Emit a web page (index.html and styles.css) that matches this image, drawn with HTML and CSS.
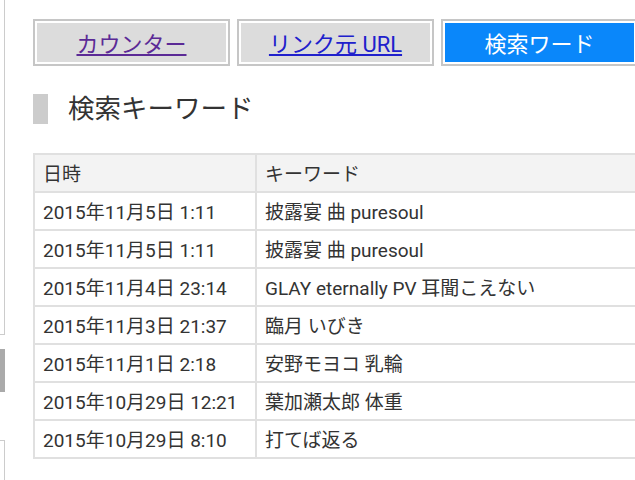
FILE: index.html
```
<!DOCTYPE html>
<html lang="ja">
<head>
<meta charset="utf-8">
<link rel="stylesheet" href="styles.css">
</head>
<body>
<div class="page">
  <aside class="side">
    <div class="side-box"></div>
    <div class="side-block"></div>
    <div class="side-box2"></div>
  </aside>
  <main class="main">
    <nav class="tabs">
      <a class="tab visited" href="#">カウンター</a>
      <a class="tab link" href="#">リンク元 URL</a>
      <span class="tab active">検索ワード</span>
    </nav>
    <h2 class="heading"><span class="bar"></span>検索キーワード</h2>
    <table class="kw">
      <thead>
        <tr><th class="c1">日時</th><th>キーワード</th></tr>
      </thead>
      <tbody>
        <tr><td>2015年11月5日 1:11</td><td>披露宴 曲 puresoul</td></tr>
        <tr><td>2015年11月5日 1:11</td><td>披露宴 曲 puresoul</td></tr>
        <tr><td>2015年11月4日 23:14</td><td>GLAY eternally PV 耳聞こえない</td></tr>
        <tr><td>2015年11月3日 21:37</td><td>臨月 いびき</td></tr>
        <tr><td>2015年11月1日 2:18</td><td>安野モヨコ 乳輪</td></tr>
        <tr><td>2015年10月29日 12:21</td><td>葉加瀬太郎 体重</td></tr>
        <tr><td>2015年10月29日 8:10</td><td>打てば返る</td></tr>
      </tbody>
    </table>
  </main>
</div>
</body>
</html>
```
FILE: styles.css
```
html, body {
  margin: 0;
  padding: 0;
  background: #fff;
  overflow: hidden;
}
body {
  width: 635px;
  height: 480px;
  font-family: Roboto, "Noto Sans CJK JP", sans-serif;
  color: #333;
}
.page {
  display: flex;
  width: 635px;
  height: 480px;
  overflow: hidden;
}
.side {
  width: 5px;
  flex: none;
  display: flex;
  flex-direction: column;
}
.side-box {
  height: 339px;
  border-right: 1px solid #ccc;
  border-bottom: 1px solid #ccc;
  box-sizing: border-box;
}
.side-block {
  margin-top: 14px;
  height: 44px;
  background: #aaa;
}
.side-box2 {
  margin-top: 48px;
  height: 40px;
  border-top: 1px solid #ccc;
  border-right: 1px solid #ccc;
  box-sizing: border-box;
}
.main {
  margin-left: 28px;
  padding-top: 19px;
  width: 610px;
  flex: none;
}
.tabs {
  display: flex;
  gap: 7px;
}
.tab {
  flex: none;
  width: 197px;
  height: 47px;
  box-sizing: border-box;
  border: 2px solid #c6c6c6;
  box-shadow: inset 0 0 0 2px #fff;
  background: #dcdcdc;
  display: flex;
  align-items: center;
  justify-content: center;
  font-size: 22px;
  padding-bottom: 2px;
}
.tab.visited { color: #5b2a96; text-decoration: underline; }
.tab.link { color: #2020cc; text-decoration: underline; }
.tab.active { background: #0a87fa; color: #fff; }
.heading {
  margin: 28px 0 0;
  display: flex;
  align-items: center;
  font-size: 26.5px;
  font-weight: normal;
  color: #333;
  height: 30px;
  line-height: 30px;
}
.bar {
  width: 15px;
  height: 30px;
  background: #ccc;
  margin-right: 20px;
}
.kw {
  margin-top: 29px;
  border-collapse: collapse;
  width: 640px;
  border: 2px solid #e0e0e0;
  font-size: 19px;
}
.kw th, .kw td {
  border: 2px solid #e0e0e0;
  height: 38px;
  box-sizing: border-box;
  padding: 0 0 1px 8px;
  text-align: left;
  font-weight: normal;
  color: #333;
  white-space: nowrap;
}
.kw th { background: #f3f3f3; }
.kw .c1 { width: 222px; }
```
